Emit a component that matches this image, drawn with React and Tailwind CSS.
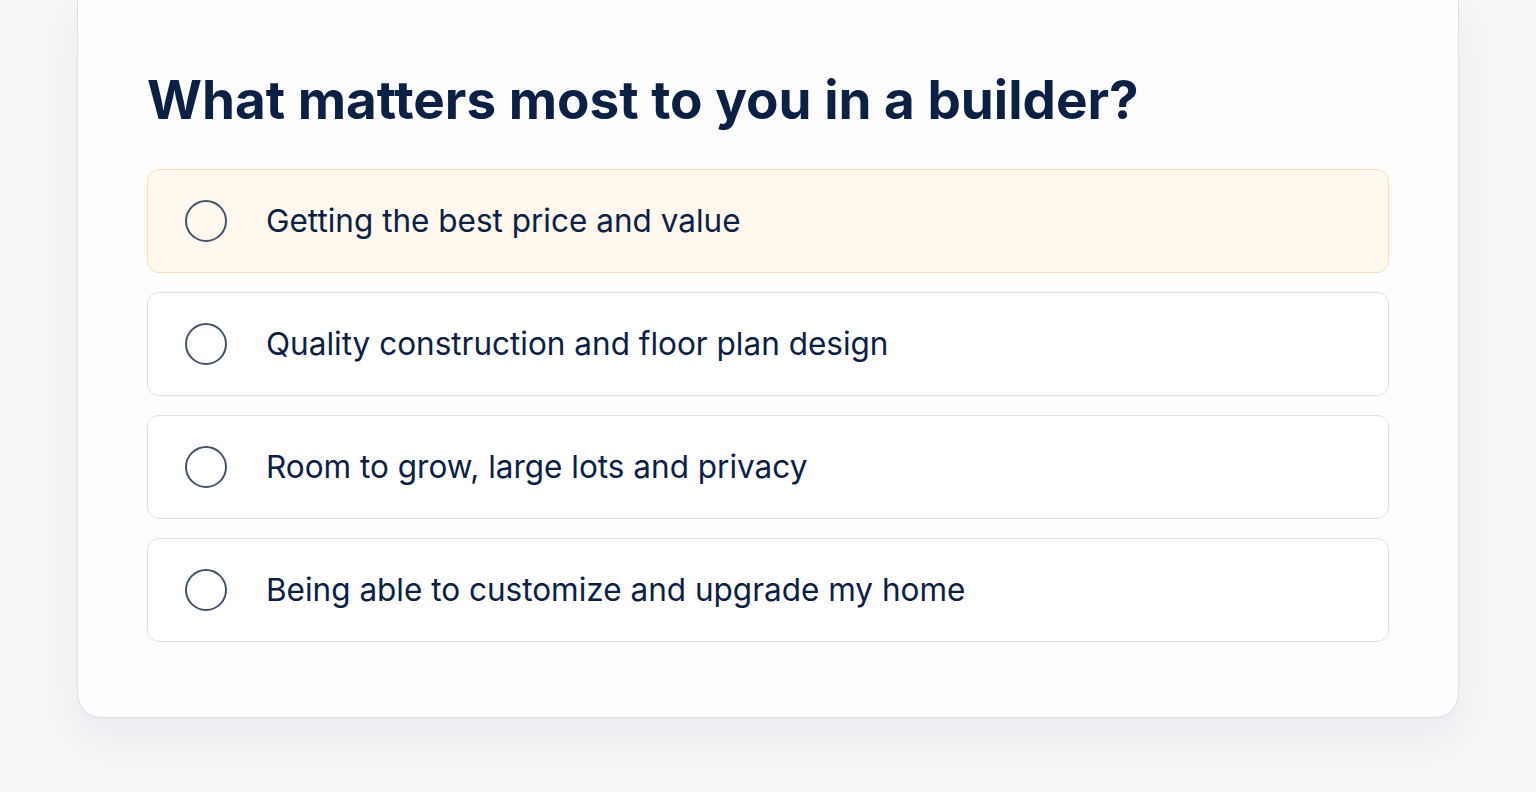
import React from 'react';

const options = [
  { id: 'value', label: 'Getting the best price and value', active: true },
  { id: 'quality', label: 'Quality construction and floor plan design' },
  { id: 'space', label: 'Room to grow, large lots and privacy' },
  { id: 'custom', label: 'Being able to customize and upgrade my home' },
];

const App = () => {
  return (
    <div
      className="min-h-screen bg-[#f5f6f8] px-[77px] pb-[76px]"
      style={{ fontFamily: 'Inter, "Noto Sans", sans-serif' }}
    >
      <div className="rounded-b-[24px] border-x border-b border-[#dcdfe5] bg-[#fdfdfd] px-[69px] pt-[64px] pb-[75px] shadow-[0_18px_40px_rgba(15,23,42,0.05)]">
        <h1 className="mb-[33px] text-[53px] leading-[72px] font-bold text-[#0c2044]">
          What matters most to you in a builder?
        </h1>

        <div className="flex flex-col gap-[19px]">
          {options.map((option) => (
            <button
              key={option.id}
              className={
                option.active
                  ? 'flex h-[104px] w-full items-center gap-[39px] rounded-[12px] border border-[#f6dfb6] bg-[#fff8ee] pl-[37px] text-left'
                  : 'flex h-[104px] w-full items-center gap-[39px] rounded-[12px] border border-[#dde0e6] bg-white pl-[37px] text-left'
              }
            >
              <span className="h-[42px] w-[42px] shrink-0 rounded-full border-[2.5px] border-[#44546a]" />
              <span className="text-[31.5px] text-[#0c2044]">{option.label}</span>
            </button>
          ))}
        </div>
      </div>
    </div>
  );
};

export default App;
